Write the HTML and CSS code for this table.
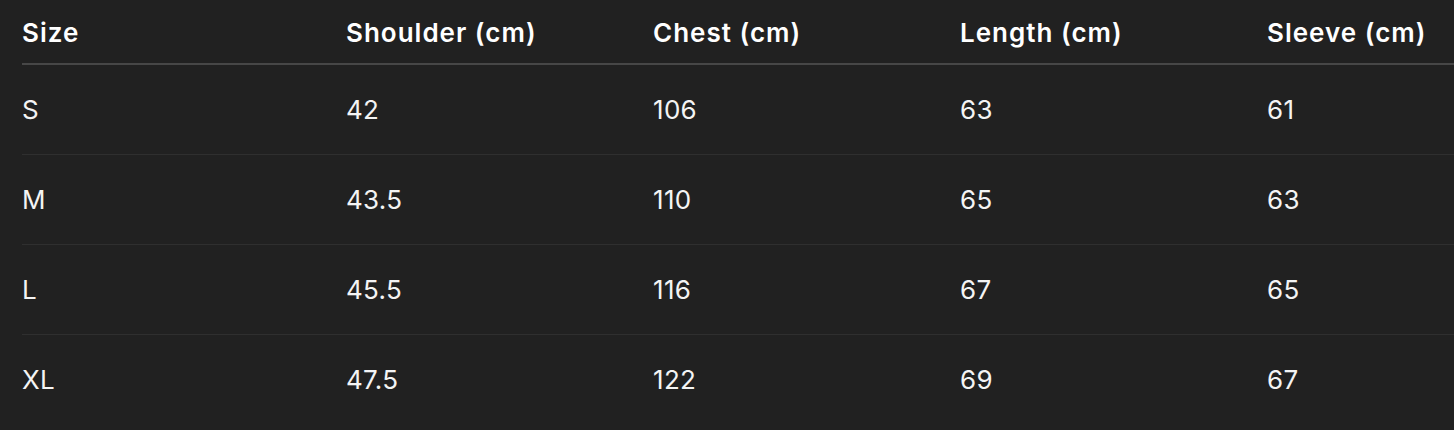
FILE: index.html
```html
<!DOCTYPE html>
<html lang="en">
<head>
<meta charset="utf-8">
<title>Size chart</title>
<link rel="stylesheet" href="styles.css">
</head>
<body>
<div class="wrap">
<table class="size-table">
  <colgroup>
    <col class="c-first">
    <col class="c">
    <col class="c">
    <col class="c">
    <col class="c">
  </colgroup>
  <thead>
    <tr><th>Size</th><th>Shoulder (cm)</th><th>Chest (cm)</th><th>Length (cm)</th><th>Sleeve (cm)</th></tr>
  </thead>
  <tbody>
    <tr><td>S</td><td>42</td><td>106</td><td>63</td><td>61</td></tr>
    <tr><td>M</td><td>43.5</td><td>110</td><td>65</td><td>63</td></tr>
    <tr><td>L</td><td>45.5</td><td>116</td><td>67</td><td>65</td></tr>
    <tr class="last"><td>XL</td><td>47.5</td><td>122</td><td>69</td><td>67</td></tr>
  </tbody>
</table>
</div>
</body>
</html>
```
FILE: styles.css
```css
html, body {
  margin: 0;
  padding: 0;
  background: #212121;
  overflow: hidden;
}
.wrap {
  padding-left: 22px;
  width: 1700px;
}
.size-table {
  border-collapse: collapse;
  table-layout: fixed;
  width: 1552px;
  font-family: Inter, "Noto Sans", sans-serif;
  font-size: 26px;
  color: #ffffff;
}
.c-first { width: 324px; }
.c { width: 307px; }
.size-table th {
  text-align: left;
  font-weight: 600;
  height: 64px;
  padding: 1px 0 0 0;
  box-sizing: border-box;
  vertical-align: middle;
  border-bottom: 2px solid #474747;
  letter-spacing: 1px;
}
.size-table td {
  text-align: left;
  font-weight: 400;
  height: 90px;
  padding: 0;
  box-sizing: border-box;
  vertical-align: middle;
  border-bottom: 1px solid #2f2f2f;
  color: #f4f4f4;
  letter-spacing: 0.3px;
}
.size-table tr.last td {
  border-bottom: none;
}
```
